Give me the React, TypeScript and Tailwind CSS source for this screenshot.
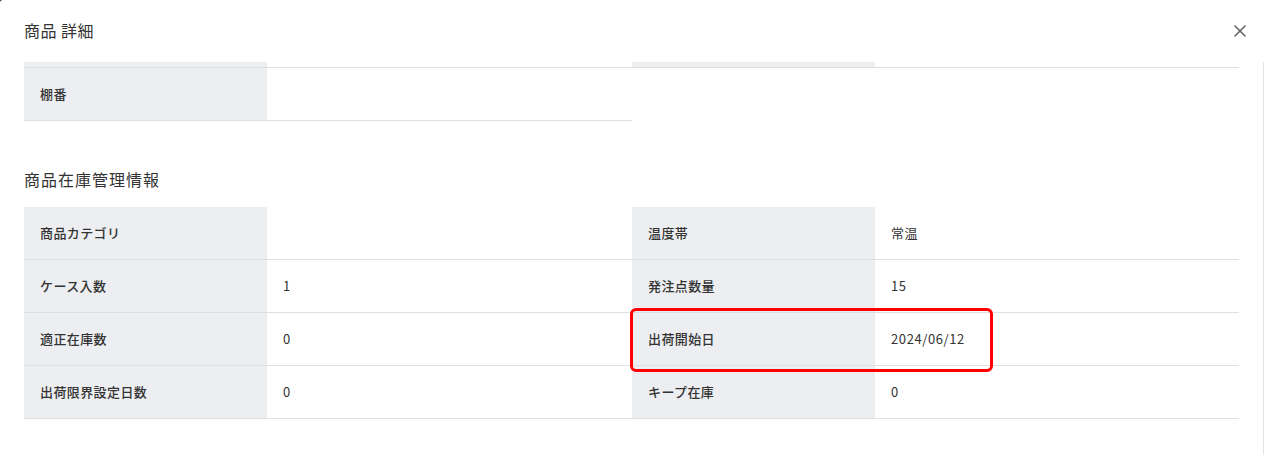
import { X } from "lucide-react";

type Cell = { label: string; value?: string };

const rows: [Cell, Cell][] = [
  [{ label: "商品カテゴリ" }, { label: "温度帯", value: "常温" }],
  [{ label: "ケース入数", value: "1" }, { label: "発注点数量", value: "15" }],
  [{ label: "適正在庫数", value: "0" }, { label: "出荷開始日", value: "2024/06/12" }],
  [{ label: "出荷限界設定日数", value: "0" }, { label: "キープ在庫", value: "0" }],
];

const font = { fontFamily: '"Noto Sans CJK JP", "Noto Sans", sans-serif' };

const Pair = ({ cell }: { cell: Cell }) => (
  <>
    <div className="w-[243px] bg-[#eceef1] pl-4 flex items-center text-[13px] font-medium tracking-[0.4px] text-[#333]">
      {cell.label}
    </div>
    <div className="flex-1 pl-4 flex items-center text-[13px] tracking-[0.6px] text-[#333]">{cell.value}</div>
  </>
);

export default function App() {
  return (
    <div className="w-[1264px] h-[455px] bg-[#3a4540] overflow-hidden" style={font}>
      <div className="relative w-full h-full bg-white rounded-tl-[3px] flex flex-col">
        <header className="h-[62px] shrink-0 flex items-center justify-between pl-6 pr-[14px]">
          <h2 className="text-[16px] text-[#333] tracking-[0.5px] -mt-[2px]">商品 詳細</h2>
          <X className="w-[20px] h-[20px] text-[#666]" strokeWidth={2} />
        </header>

        <div className="flex flex-1">
          <div className="w-[1239px] pl-6">
            {/* previous row, scrolled mostly out of view */}
            <div className="flex h-[6px] border-b border-[#e0e0e0]">
              <div className="w-[243px] bg-[#eceef1]" />
              <div className="w-[365px]" />
              <div className="w-[243px] bg-[#eceef1]" />
              <div className="flex-1" />
            </div>
            <div className="w-[608px] flex h-[53px] border-b border-[#e0e0e0]">
              <Pair cell={{ label: "棚番" }} />
            </div>

            <h3 className="mt-[46px] mb-[16px] text-[16px] tracking-[1px] text-[#333] leading-[24px]">
              商品在庫管理情報
            </h3>

            {rows.map(([a, b], i) => (
              <div key={i} className="flex h-[53px] border-b border-[#e0e0e0]">
                <div className="w-[608px] flex">
                  <Pair cell={a} />
                </div>
                <div className="flex-1 flex">
                  <Pair cell={b} />
                </div>
              </div>
            ))}
          </div>
          <div className="flex-1 border-r border-[#e3e3e3]" />
        </div>

        <div className="absolute left-[630px] top-[308px] w-[363px] h-[64px] border-[3px] border-[#ff0000] rounded-[6px]" />
      </div>
    </div>
  );
}
